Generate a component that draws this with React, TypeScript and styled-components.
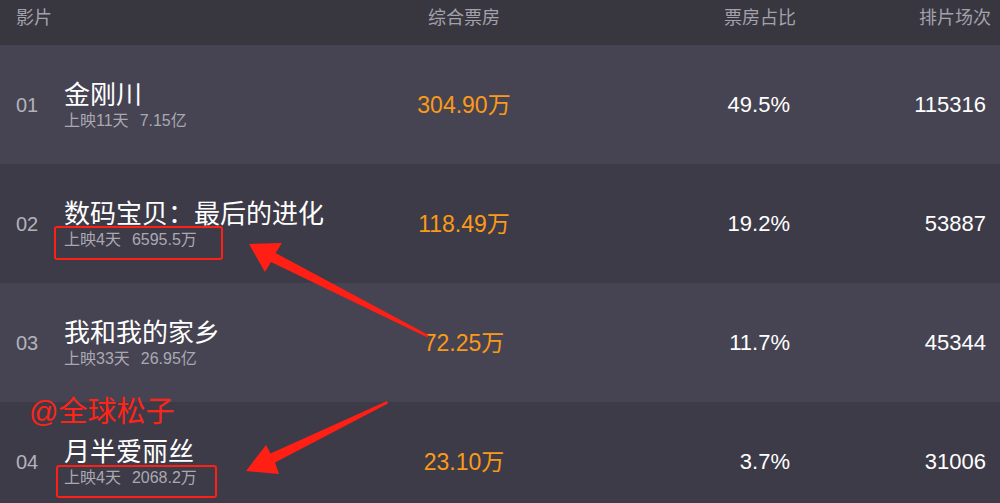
import React from "react";
import styled, { createGlobalStyle } from "styled-components";

const Global = createGlobalStyle`
  html, body { margin: 0; padding: 0; }
  body {
    background: #3d3b48;
    font-family: "Liberation Sans", "Noto Sans CJK SC", sans-serif;
    overflow: hidden;
  }
`;

const Page = styled.div`
  position: relative;
  width: 1000px;
  height: 503px;
  overflow: hidden;
  background: #3d3b48;
`;

const HeaderRow = styled.div`
  display: grid;
  grid-template-columns: 368px 160px 252px 195px;
  height: 45px;
  padding: 8px 9px 0 16px;
  box-sizing: border-box;
  background: #38363f;
  color: #a3a1ab;
  font-size: 18px;
  line-height: 20px;
`;

const HeadCell = styled.div<{ $align: "left" | "center" | "right" }>`
  text-align: ${(p) => p.$align};
  white-space: nowrap;
`;

const Row = styled.div<{ $light: boolean }>`
  display: grid;
  grid-template-columns: 368px 160px 246px 196px;
  align-items: center;
  height: 119px;
  padding: 0 14px 0 16px;
  box-sizing: border-box;
  background: ${(p) => (p.$light ? "#464452" : "#3d3b48")};
`;

const FilmCell = styled.div`
  display: flex;
  align-items: center;
`;

const Rank = styled.div`
  width: 48px;
  flex: none;
  color: #b3b2bb;
  font-size: 20px;
  line-height: 24px;
`;

const Info = styled.div`
  display: flex;
  flex-direction: column;
  margin-top: 2px;
`;

const Title = styled.div`
  color: #ffffff;
  font-size: 26px;
  line-height: 30px;
  white-space: nowrap;
`;

const Sub = styled.div`
  display: flex;
  margin-top: 1px;
  color: #aaa9b2;
  font-size: 16px;
  line-height: 20px;
  white-space: nowrap;
`;

const SubTotal = styled.span`
  margin-left: 11px;
`;

const Value = styled.div<{ $align: "center" | "right"; $orange?: boolean }>`
  text-align: ${(p) => p.$align};
  color: ${(p) => (p.$orange ? "#fb9a17" : "#ffffff")};
  font-size: ${(p) => (p.$orange ? "23px" : "22px")};
  line-height: 26px;
  white-space: nowrap;
`;

const Overlay = styled.svg`
  position: absolute;
  left: 0;
  top: 0;
  pointer-events: none;
`;

const Watermark = styled.div`
  position: absolute;
  left: 29px;
  top: 394px;
  color: #ff2418;
  font-size: 29px;
  line-height: 36px;
  font-family: "Liberation Sans", "Noto Sans CJK SC", sans-serif;
  white-space: nowrap;
`;

type Film = {
  rank: string;
  name: string;
  days: string;
  total: string;
  box: string;
  pct: string;
  shows: string;
};

const films: Film[] = [
  { rank: "01", name: "金刚川", days: "上映11天", total: "7.15亿", box: "304.90万", pct: "49.5%", shows: "115316" },
  { rank: "02", name: "数码宝贝：最后的进化", days: "上映4天", total: "6595.5万", box: "118.49万", pct: "19.2%", shows: "53887" },
  { rank: "03", name: "我和我的家乡", days: "上映33天", total: "26.95亿", box: "72.25万", pct: "11.7%", shows: "45344" },
  { rank: "04", name: "月半爱丽丝", days: "上映4天", total: "2068.2万", box: "23.10万", pct: "3.7%", shows: "31006" },
];

const RED = "#ff1f14";

export default function App() {
  return (
    <>
      <Global />
      <Page>
        <HeaderRow>
          <HeadCell $align="left">影片</HeadCell>
          <HeadCell $align="center">综合票房</HeadCell>
          <HeadCell $align="right">票房占比</HeadCell>
          <HeadCell $align="right">排片场次</HeadCell>
        </HeaderRow>
        {films.map((f, i) => (
          <Row key={f.rank} $light={i % 2 === 0}>
            <FilmCell>
              <Rank>{f.rank}</Rank>
              <Info>
                <Title>{f.name}</Title>
                <Sub>
                  <span>{f.days}</span>
                  <SubTotal>{f.total}</SubTotal>
                </Sub>
              </Info>
            </FilmCell>
            <Value $align="center" $orange>
              {f.box}
            </Value>
            <Value $align="right">{f.pct}</Value>
            <Value $align="right">{f.shows}</Value>
          </Row>
        ))}
        <Watermark>@全球松子</Watermark>
        <Overlay width="1000" height="503" viewBox="0 0 1000 503">
          <rect x="55" y="227" width="167" height="32" rx="2" fill="none" stroke={RED} strokeWidth="2" />
          <rect x="57" y="466" width="159" height="31" rx="2" fill="none" stroke={RED} strokeWidth="2" />
          <polygon
            points="249,244 282,243 275.5,253 428.5,335 427.5,337.5 271,262 265,272"
            fill={RED}
          />
          <polygon
            points="246,471 266,445 270.5,453.5 387,401 388,403.5 275,462.5 279,474"
            fill={RED}
          />
        </Overlay>
      </Page>
    </>
  );
}
